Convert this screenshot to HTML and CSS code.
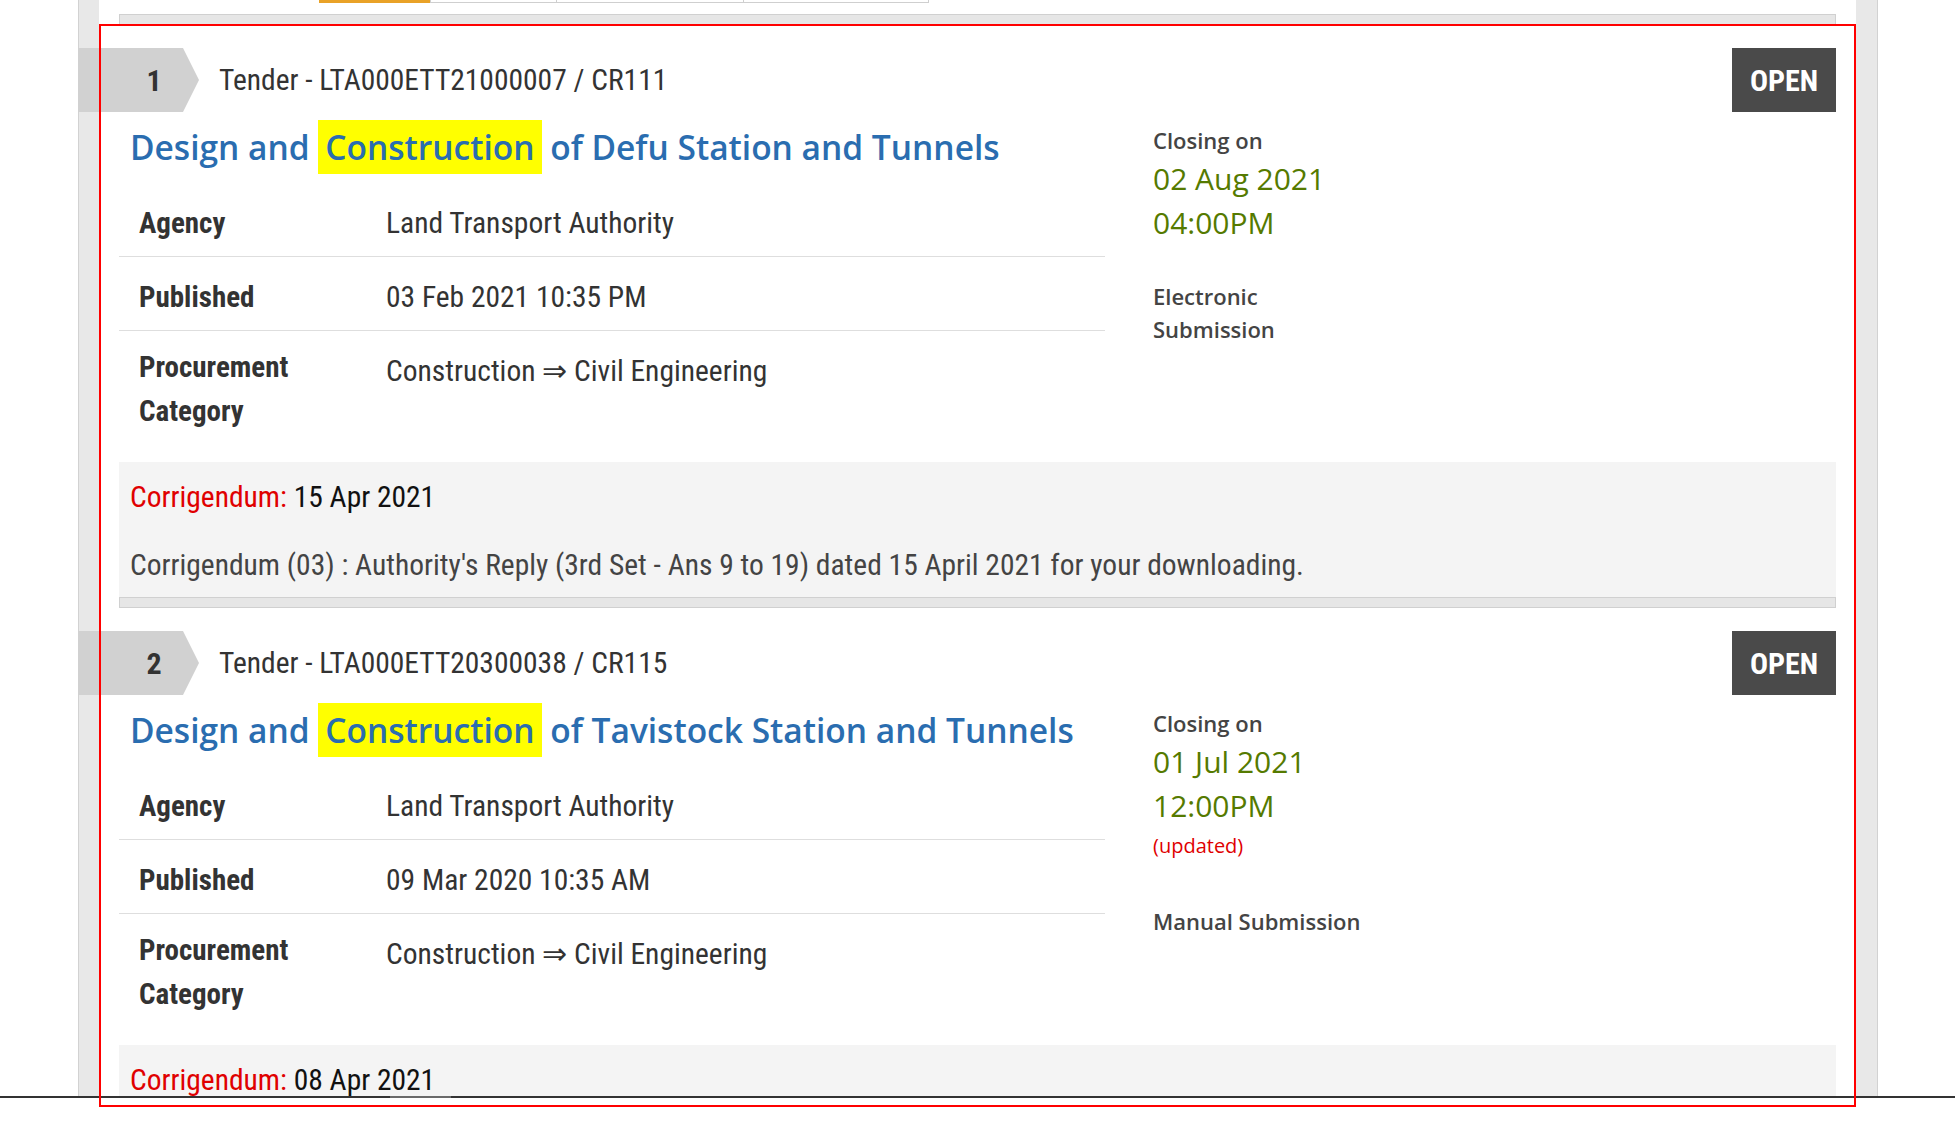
FILE: index.html
```html
<!DOCTYPE html>
<html>
<head>
<meta charset="utf-8">
<title>Tenders</title>
<link rel="stylesheet" href="styles.css">
</head>
<body>
<div class="page">
  <div class="frame">
    <div class="inner">
      <div class="tabs"><span class="tab tab-active"></span><span class="tab t1"></span><span class="tab t2"></span><span class="tab t3"></span></div>
      <div class="sep sep-top"></div>

      <div class="card">
        <div class="card-head">
          <div class="num">1</div>
          <div class="ref">Tender - LTA000ETT21000007 / CR111</div>
          <div class="status">OPEN</div>
        </div>
        <div class="card-body">
          <div class="main">
            <h2 class="title">Design and <span class="hl">Construction</span> of Defu Station and Tunnels</h2>
            <div class="rows">
              <div class="row"><div class="label">Agency</div><div class="value">Land Transport Authority</div></div>
              <div class="row"><div class="label">Published</div><div class="value">03 Feb 2021 10:35 PM</div></div>
              <div class="row row-tall"><div class="label">Procurement Category</div><div class="value">Construction &rArr; Civil Engineering</div></div>
            </div>
          </div>
          <div class="side">
            <div class="closing-label">Closing on</div>
            <div class="closing-date">02 Aug 2021</div>
            <div class="closing-date">04:00PM</div>
            <div class="submission">Electronic Submission</div>
          </div>
        </div>
        <div class="corr">
          <p class="corr-head"><span class="corr-tag">Corrigendum:</span> <span class="corr-date">15 Apr 2021</span></p>
          <p class="corr-desc">Corrigendum (03) : Authority's Reply (3rd Set - Ans 9 to 19) dated 15 April 2021 for your downloading.</p>
        </div>
      </div>

      <div class="sep"></div>

      <div class="card">
        <div class="card-head">
          <div class="num">2</div>
          <div class="ref">Tender - LTA000ETT20300038 / CR115</div>
          <div class="status">OPEN</div>
        </div>
        <div class="card-body">
          <div class="main">
            <h2 class="title">Design and <span class="hl">Construction</span> of Tavistock Station and Tunnels</h2>
            <div class="rows">
              <div class="row"><div class="label">Agency</div><div class="value">Land Transport Authority</div></div>
              <div class="row"><div class="label">Published</div><div class="value">09 Mar 2020 10:35 AM</div></div>
              <div class="row row-tall"><div class="label">Procurement Category</div><div class="value">Construction &rArr; Civil Engineering</div></div>
            </div>
          </div>
          <div class="side">
            <div class="closing-label">Closing on</div>
            <div class="closing-date">01 Jul 2021</div>
            <div class="closing-date">12:00PM</div>
            <div class="updated">(updated)</div>
            <div class="submission">Manual Submission</div>
          </div>
        </div>
        <div class="corr">
          <p class="corr-head"><span class="corr-tag">Corrigendum:</span> <span class="corr-date">08 Apr 2021</span></p>
          <p class="corr-desc">Corrigendum (02) : Authority's Reply dated 08 April 2021 for your downloading.</p>
        </div>
      </div>
    </div>
  </div>
</div>
<div class="rule"><span class="thumb"></span></div>
<div class="highlight"></div>
</body>
</html>
```

FILE: styles.css
```css
* { box-sizing: border-box; }
html, body { margin: 0; padding: 0; background: #fff; }
body {
  position: relative;
  width: 1955px;
  height: 1132px;
  overflow: hidden;
  font-family: "Open Sans", sans-serif;
  color: #333;
}

.page { height: 1096px; overflow: hidden; }

.frame {
  margin-left: 78px;
  width: 1800px;
  height: 100%;
  background: #e8e8e8;
  border-left: 1px solid #d2d2d2;
  border-right: 1px solid #d2d2d2;
  padding: 0 21px 0 20px;
}

.inner { background: #fff; height: 100%; padding: 0 20px; }

.tabs { display: flex; height: 3px; margin-left: 200px; }
.tab { display: block; height: 3px; border: 1px solid #cfcfcf; border-top: 0; background: #fff; }
.tab-active { width: 111px; background: #e9a227; border: 0; }
.t1 { width: 127px; }
.t2 { width: 187px; border-left: 0; }
.t3 { width: 185px; border-left: 0; }

.sep { height: 11px; background: #e6e6e6; border: 1px solid #d0d0d0; }
.sep-top { margin-top: 11px; }

.card { padding-top: 23px; }

.card-head { display: flex; align-items: center; height: 64px; }
.num {
  margin-left: -41px;
  width: 121px;
  height: 64px;
  padding: 0 15px 0 46px;
  background: #d1d1d1;
  clip-path: polygon(0 0, 105px 0, 121px 50%, 105px 100%, 0 100%);
  display: flex;
  align-items: center;
  justify-content: center;
  font-family: "Roboto Condensed", "Liberation Sans", sans-serif;
  font-weight: 700;
  font-size: 30px;
  color: #333;
}
.ref {
  margin-left: 20px;
  font-family: "Roboto Condensed", "Liberation Sans", sans-serif;
  font-size: 29.5px;
  color: #333;
}
.status {
  margin-left: auto;
  width: 104px;
  height: 64px;
  background: #4a4a4a;
  color: #fff;
  display: flex;
  align-items: center;
  justify-content: center;
  font-family: "Roboto Condensed", "Liberation Sans", sans-serif;
  font-weight: 700;
  font-size: 30px;
}

.card-body { display: grid; grid-template-columns: 986px 224px; column-gap: 48px; }

.title {
  margin: 11px 0 0;
  padding-left: 11px;
  font-family: "Open Sans", sans-serif;
  font-weight: 600;
  font-size: 33.5px;
  line-height: 48px;
  color: #2a6db0;
}
.hl { background: #ffff00; padding: 4px 7px 4px; }

.rows { margin-top: 12px; }
.row {
  display: grid;
  grid-template-columns: 267px 1fr;
  padding: 18px 0 11px;
  border-bottom: 1px solid #dedede;
  font-family: "Roboto Condensed", "Liberation Sans", sans-serif;
  font-size: 29.5px;
  line-height: 44px;
  color: #333;
}
.row:last-child { border-bottom: 0; }
.label { padding-left: 20px; font-weight: 700; font-size: 29px; }
.row-tall { padding: 14px 0 15px; }
.row-tall .value { padding-top: 4px; }

.side { margin-top: 11px; }
.closing-label { font-weight: 600; font-size: 22px; line-height: 34px; color: #444; }
.closing-date { font-size: 30px; line-height: 44px; color: #557a00; }
.updated { font-size: 20px; line-height: 30px; color: #e00000; margin-top: 3px; padding-bottom: 9px; }
.submission { margin-top: 35px; font-weight: 600; font-size: 22px; line-height: 33px; color: #444; }

.corr {
  margin-top: 14px;
  height: 135px;
  background: #f4f4f4;
  padding: 13px 11px 10px;
  font-family: "Roboto Condensed", "Liberation Sans", sans-serif;
  font-size: 29.5px;
  line-height: 44px;
}
.corr p { margin: 0; }
.corr-tag { color: #e00000; }
.corr-date { color: #111; }
.corr .corr-desc { margin-top: 24px; color: #444; }

.rule { position: relative; height: 2px; background: #333; }
.thumb { position: absolute; left: 390px; top: 0; width: 61px; height: 2px; background: #6a6a6a; }

.highlight {
  position: absolute;
  left: 99px;
  top: 24px;
  width: 1757px;
  height: 1083px;
  border: 2px solid #ff0000;
  pointer-events: none;
}
```
